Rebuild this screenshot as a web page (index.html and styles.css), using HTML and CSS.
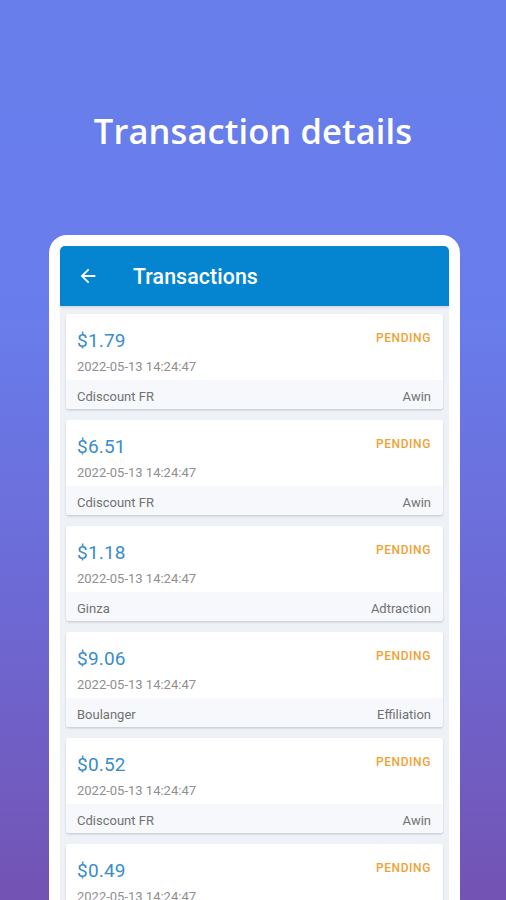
FILE: index.html
```html
<!DOCTYPE html>
<html>
<head>
<meta charset="utf-8">
<link rel="stylesheet" href="styles.css">
</head>
<body>
<div class="page">
  <header class="hero">
    <h1 class="hero-title">Transaction details</h1>
  </header>
  <div class="phone">
    <div class="screen">
      <div class="appbar">
        <svg class="back" viewBox="0 0 24 24" width="22" height="22"><path d="M20 11H7.83l5.59-5.59L12 4l-8 8 8 8 1.41-1.41L7.83 13H20v-2z" fill="#fff"/></svg>
        <span class="appbar-title">Transactions</span>
      </div>
      <div class="list">
        <div class="card">
          <div class="card-body">
            <div class="row"><span class="amount">$1.79</span><span class="status">PENDING</span></div>
            <div class="date">2022-05-13 14:24:47</div>
          </div>
          <div class="card-foot"><span>Cdiscount FR</span><span>Awin</span></div>
        </div>
        <div class="card">
          <div class="card-body">
            <div class="row"><span class="amount">$6.51</span><span class="status">PENDING</span></div>
            <div class="date">2022-05-13 14:24:47</div>
          </div>
          <div class="card-foot"><span>Cdiscount FR</span><span>Awin</span></div>
        </div>
        <div class="card">
          <div class="card-body">
            <div class="row"><span class="amount">$1.18</span><span class="status">PENDING</span></div>
            <div class="date">2022-05-13 14:24:47</div>
          </div>
          <div class="card-foot"><span>Ginza</span><span>Adtraction</span></div>
        </div>
        <div class="card">
          <div class="card-body">
            <div class="row"><span class="amount">$9.06</span><span class="status">PENDING</span></div>
            <div class="date">2022-05-13 14:24:47</div>
          </div>
          <div class="card-foot"><span>Boulanger</span><span>Effiliation</span></div>
        </div>
        <div class="card">
          <div class="card-body">
            <div class="row"><span class="amount">$0.52</span><span class="status">PENDING</span></div>
            <div class="date">2022-05-13 14:24:47</div>
          </div>
          <div class="card-foot"><span>Cdiscount FR</span><span>Awin</span></div>
        </div>
        <div class="card">
          <div class="card-body">
            <div class="row"><span class="amount">$0.49</span><span class="status">PENDING</span></div>
            <div class="date">2022-05-13 14:24:47</div>
          </div>
          <div class="card-foot"><span>Cdiscount FR</span><span>Awin</span></div>
        </div>
      </div>
    </div>
  </div>
</div>
</body>
</html>
```
FILE: styles.css
```css
* { box-sizing: border-box; }
html, body { margin: 0; padding: 0; }
body {
  width: 506px;
  height: 900px;
  overflow: hidden;
  font-family: Roboto, "Liberation Sans", sans-serif;
}
.page {
  width: 506px;
  height: 900px;
  background: linear-gradient(180deg, #687eeb 0%, #687deb 35%, #6d6ad6 65%, #7353b3 100%);
  display: flex;
  flex-direction: column;
  overflow: hidden;
}
.hero {
  height: 235px;
  flex-shrink: 0;
  display: flex;
  justify-content: center;
  padding-top: 108px;
}
.hero-title {
  margin: 0;
  font-family: "Open Sans", sans-serif;
  font-weight: 600;
  font-size: 34.5px;
  line-height: 46px;
  color: #fff;
  letter-spacing: 0.1px;
}
.phone {
  width: 411px;
  margin-left: 49px;
  flex: 1;
  min-height: 0;
  background: #fff;
  border-radius: 18px 18px 0 0;
  padding: 11px 11px 0;
  overflow: hidden;
}
.screen {
  height: 100%;
  background: #eef1f6;
  border-radius: 5px 5px 0 0;
  overflow: hidden;
}
.appbar {
  height: 60px;
  background: #0585cf;
  display: flex;
  align-items: center;
  padding-left: 17px;
  box-shadow: 0 1px 3px rgba(0,0,0,0.15);
}
.back { display: block; margin-right: 34px; }
.appbar-title {
  color: #fff;
  font-weight: 500;
  font-size: 21.3px;
  letter-spacing: 0.1px;
}
.list {
  padding: 8px 6px 0;
  display: flex;
  flex-direction: column;
  gap: 11px;
}
.card {
  background: #fff;
  border-radius: 3px;
  box-shadow: 0 1px 2px rgba(0,0,0,0.12), 0 2px 3px rgba(0,0,0,0.05);
  overflow: hidden;
  flex-shrink: 0;
}
.card-body { padding: 14px 12px 4px 11px; }
.row {
  display: flex;
  justify-content: space-between;
  align-items: center;
  height: 24px;
}
.amount {
  color: #3a8dcb;
  font-size: 19px;
  letter-spacing: 0.2px;
}
.status {
  color: #f0a234;
  font-size: 12px;
  font-weight: 500;
  letter-spacing: 0.6px;
  margin-top: -4px;
}
.date {
  margin-top: 6px;
  color: #8f8f8f;
  font-size: 13px;
  line-height: 18px;
}
.card-foot {
  height: 29px;
  background: #f6f8fb;
  display: flex;
  justify-content: space-between;
  align-items: center;
  padding: 3px 12px 0 11px;
  color: #727272;
  font-size: 13px;
}
```
